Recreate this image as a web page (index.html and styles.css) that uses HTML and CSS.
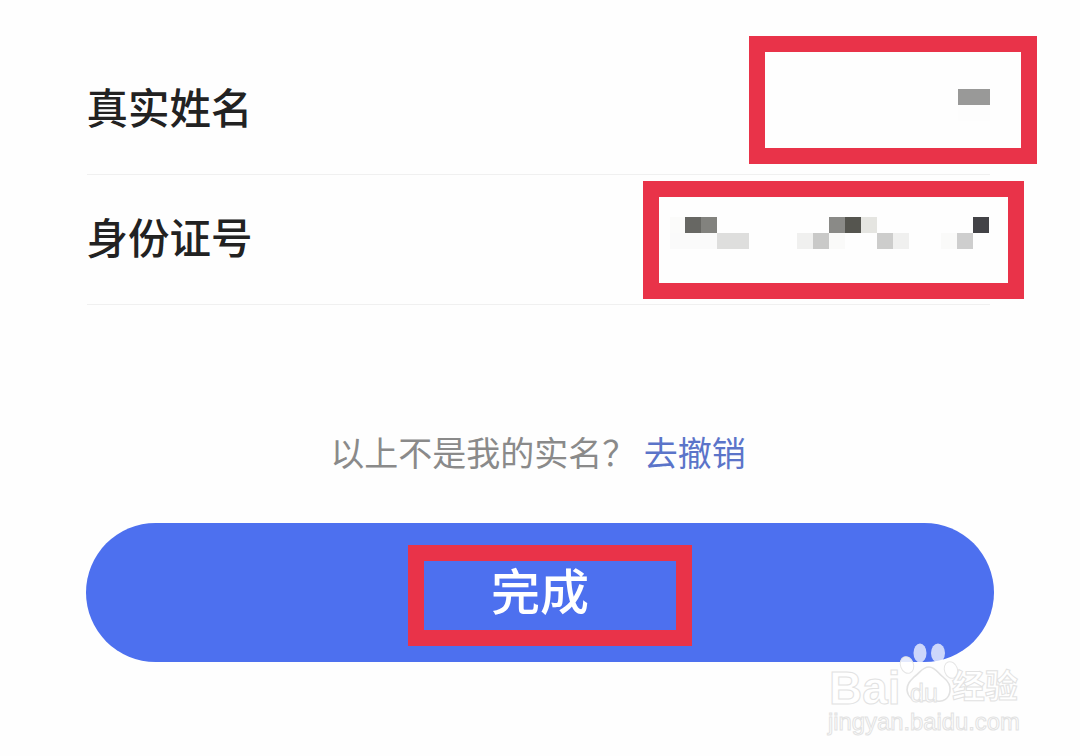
FILE: index.html
```html
<!DOCTYPE html>
<html lang="zh-CN">
<head>
<meta charset="utf-8">
<title>实名认证</title>
<link rel="stylesheet" href="styles.css">
</head>
<body>
<main class="page">
  <section class="form">
    <div class="row">
      <span class="label">真实姓名</span>
      <svg class="mosaic mosaic-name" width="320" height="32" viewBox="0 0 320 32" aria-hidden="true">
        <rect x="288" y="0" width="32" height="16" fill="#999998"/>
        <rect x="288" y="16" width="32" height="16" fill="#fdfdfd"/>
      </svg>
    </div>
    <div class="row">
      <span class="label">身份证号</span>
      <svg class="mosaic mosaic-id" width="320" height="32" viewBox="0 0 320 32" aria-hidden="true">
        <rect x="0" y="0" width="15" height="16" fill="#fbfbfa"/>
        <rect x="15" y="0" width="16" height="16" fill="#676763"/>
        <rect x="31" y="0" width="16" height="16" fill="#82827e"/>
        <rect x="0" y="16" width="47" height="16" fill="#fafafa"/>
        <rect x="47" y="16" width="32" height="16" fill="#dededd"/>
        <rect x="159" y="0" width="16" height="16" fill="#8a8a87"/>
        <rect x="175" y="0" width="16" height="16" fill="#55554f"/>
        <rect x="191" y="0" width="16" height="16" fill="#e5e5e1"/>
        <rect x="127" y="16" width="16" height="16" fill="#f0f0ef"/>
        <rect x="143" y="16" width="16" height="16" fill="#c9c9c8"/>
        <rect x="159" y="16" width="16" height="16" fill="#fafaf9"/>
        <rect x="207" y="16" width="16" height="16" fill="#cdcdcc"/>
        <rect x="223" y="16" width="16" height="16" fill="#f0f0ef"/>
        <rect x="303" y="0" width="16" height="16" fill="#434347"/>
        <rect x="271" y="16" width="16" height="16" fill="#fafaf9"/>
        <rect x="287" y="16" width="16" height="16" fill="#cecece"/>
      </svg>
    </div>
  </section>
  <p class="hint">以上不是我的实名？ <a class="hint-link">去撤销</a></p>
  <button class="done" type="button"><span class="done-text">完成</span></button>

  <div class="mark mark-name"></div>
  <div class="mark mark-id"></div>
  <div class="mark mark-done"></div>

  <div class="watermark" aria-hidden="true">
    <svg class="paw" width="64" height="68" viewBox="0 0 64 68">
      <ellipse cx="22" cy="11" rx="6.5" ry="9.5" fill="#fff" fill-opacity=".72"/>
      <ellipse cx="40" cy="11" rx="7" ry="9.5" fill="#fff" fill-opacity=".72"/>
      <ellipse cx="9" cy="23" rx="6.5" ry="8.5" transform="rotate(-20 9 23)" fill="#fff" fill-opacity=".85" stroke="#e6e6e6" stroke-width="1"/>
      <ellipse cx="53" cy="28" rx="6.5" ry="8.5" transform="rotate(-20 53 28)" fill="#fff" stroke="#e6e6e6" stroke-width="1"/>
      <path d="M31 25c6 0 9 6 14 10 5 4 8 8 7 14-1 8-7 11-13 10-3 0-5-1-8-1s-5 1-9 1c-6 0-12-3-13-11 0-6 3-9 7-13 6-4 8-10 15-10z" fill="#fff" stroke="#e2e2e2" stroke-width="1.6"/>
    </svg>
    <span class="wm-ba">Bai</span>
    <span class="wm-du">du</span>
    <span class="wm-jy">经验</span>
    <span class="wm-url">jingyan.baidu.com</span>
  </div>
</main>
</body>
</html>
```

FILE: styles.css
```css
html, body {
  margin: 0;
  padding: 0;
  height: 756px;
  overflow: hidden;
  background: #fefefe;
}

.page {
  position: relative;
  height: 756px;
  font-family: "Noto Sans CJK SC", "Liberation Sans", sans-serif;
  display: flex;
  flex-direction: column;
  padding-top: 45px;
  box-sizing: border-box;
}

.form {
  margin: 0 90px 0 87px;
}

.row {
  height: 130px;
  box-sizing: border-box;
  border-bottom: 1px solid #f0f0f0;
  padding-bottom: 5px;
  display: flex;
  justify-content: space-between;
  align-items: center;
}

.label {
  font-size: 41.5px;
  font-weight: 500;
  color: #222;
  line-height: 1;
  margin-left: -0.5px;
}

.mosaic {
  display: block;
  align-self: flex-start;
}

.mosaic-name {
  margin-top: 44px;
}

.mosaic-id {
  margin-top: 42px;
}

.hint {
  margin: 122px 0 0;
  height: 50px;
  line-height: 50px;
  text-align: center;
  font-size: 34px;
  color: #8a8a8a;
  padding-right: 4px;
}

.hint-link {
  color: #5b74c9;
}

.done {
  display: block;
  margin: 46px 86px 0;
  height: 139px;
  width: 908px;
  border: 0;
  border-radius: 70px;
  background: #4d70ef;
  color: #fff;
  font-family: inherit;
  font-size: 49px;
  font-weight: 500;
  padding: 0 0 9px;
}

.mark {
  position: absolute;
  box-sizing: border-box;
  border: 16px solid #e93349;
}

.mark-name {
  left: 749px;
  top: 36px;
  width: 288px;
  height: 128px;
}

.mark-id {
  left: 643px;
  top: 181px;
  width: 381px;
  height: 118px;
}

.mark-done {
  left: 408px;
  top: 545px;
  width: 284px;
  height: 101px;
}

.watermark {
  position: absolute;
  left: 826px;
  top: 640px;
  width: 200px;
  height: 96px;
  color: #fff;
  font-family: "Liberation Sans", sans-serif;
}

.watermark span {
  position: absolute;
  -webkit-text-stroke: 1px #e2e2e2;
  line-height: 1;
}

.paw {
  position: absolute;
  left: 72px;
  top: 2px;
}

.watermark .wm-ba {
  left: 3px;
  top: 30px;
  font-size: 46px;
  font-weight: 700;
  line-height: 0.8;
}

.watermark .wm-du {
  left: 84px;
  top: 41px;
  font-size: 25px;
}

.watermark .wm-jy {
  left: 126px;
  top: 28px;
  font-size: 33px;
  font-weight: 700;
  font-family: "Noto Sans CJK SC", sans-serif;
}

.watermark .wm-url {
  left: 2px;
  top: 70px;
  font-size: 23.8px;
}
```
